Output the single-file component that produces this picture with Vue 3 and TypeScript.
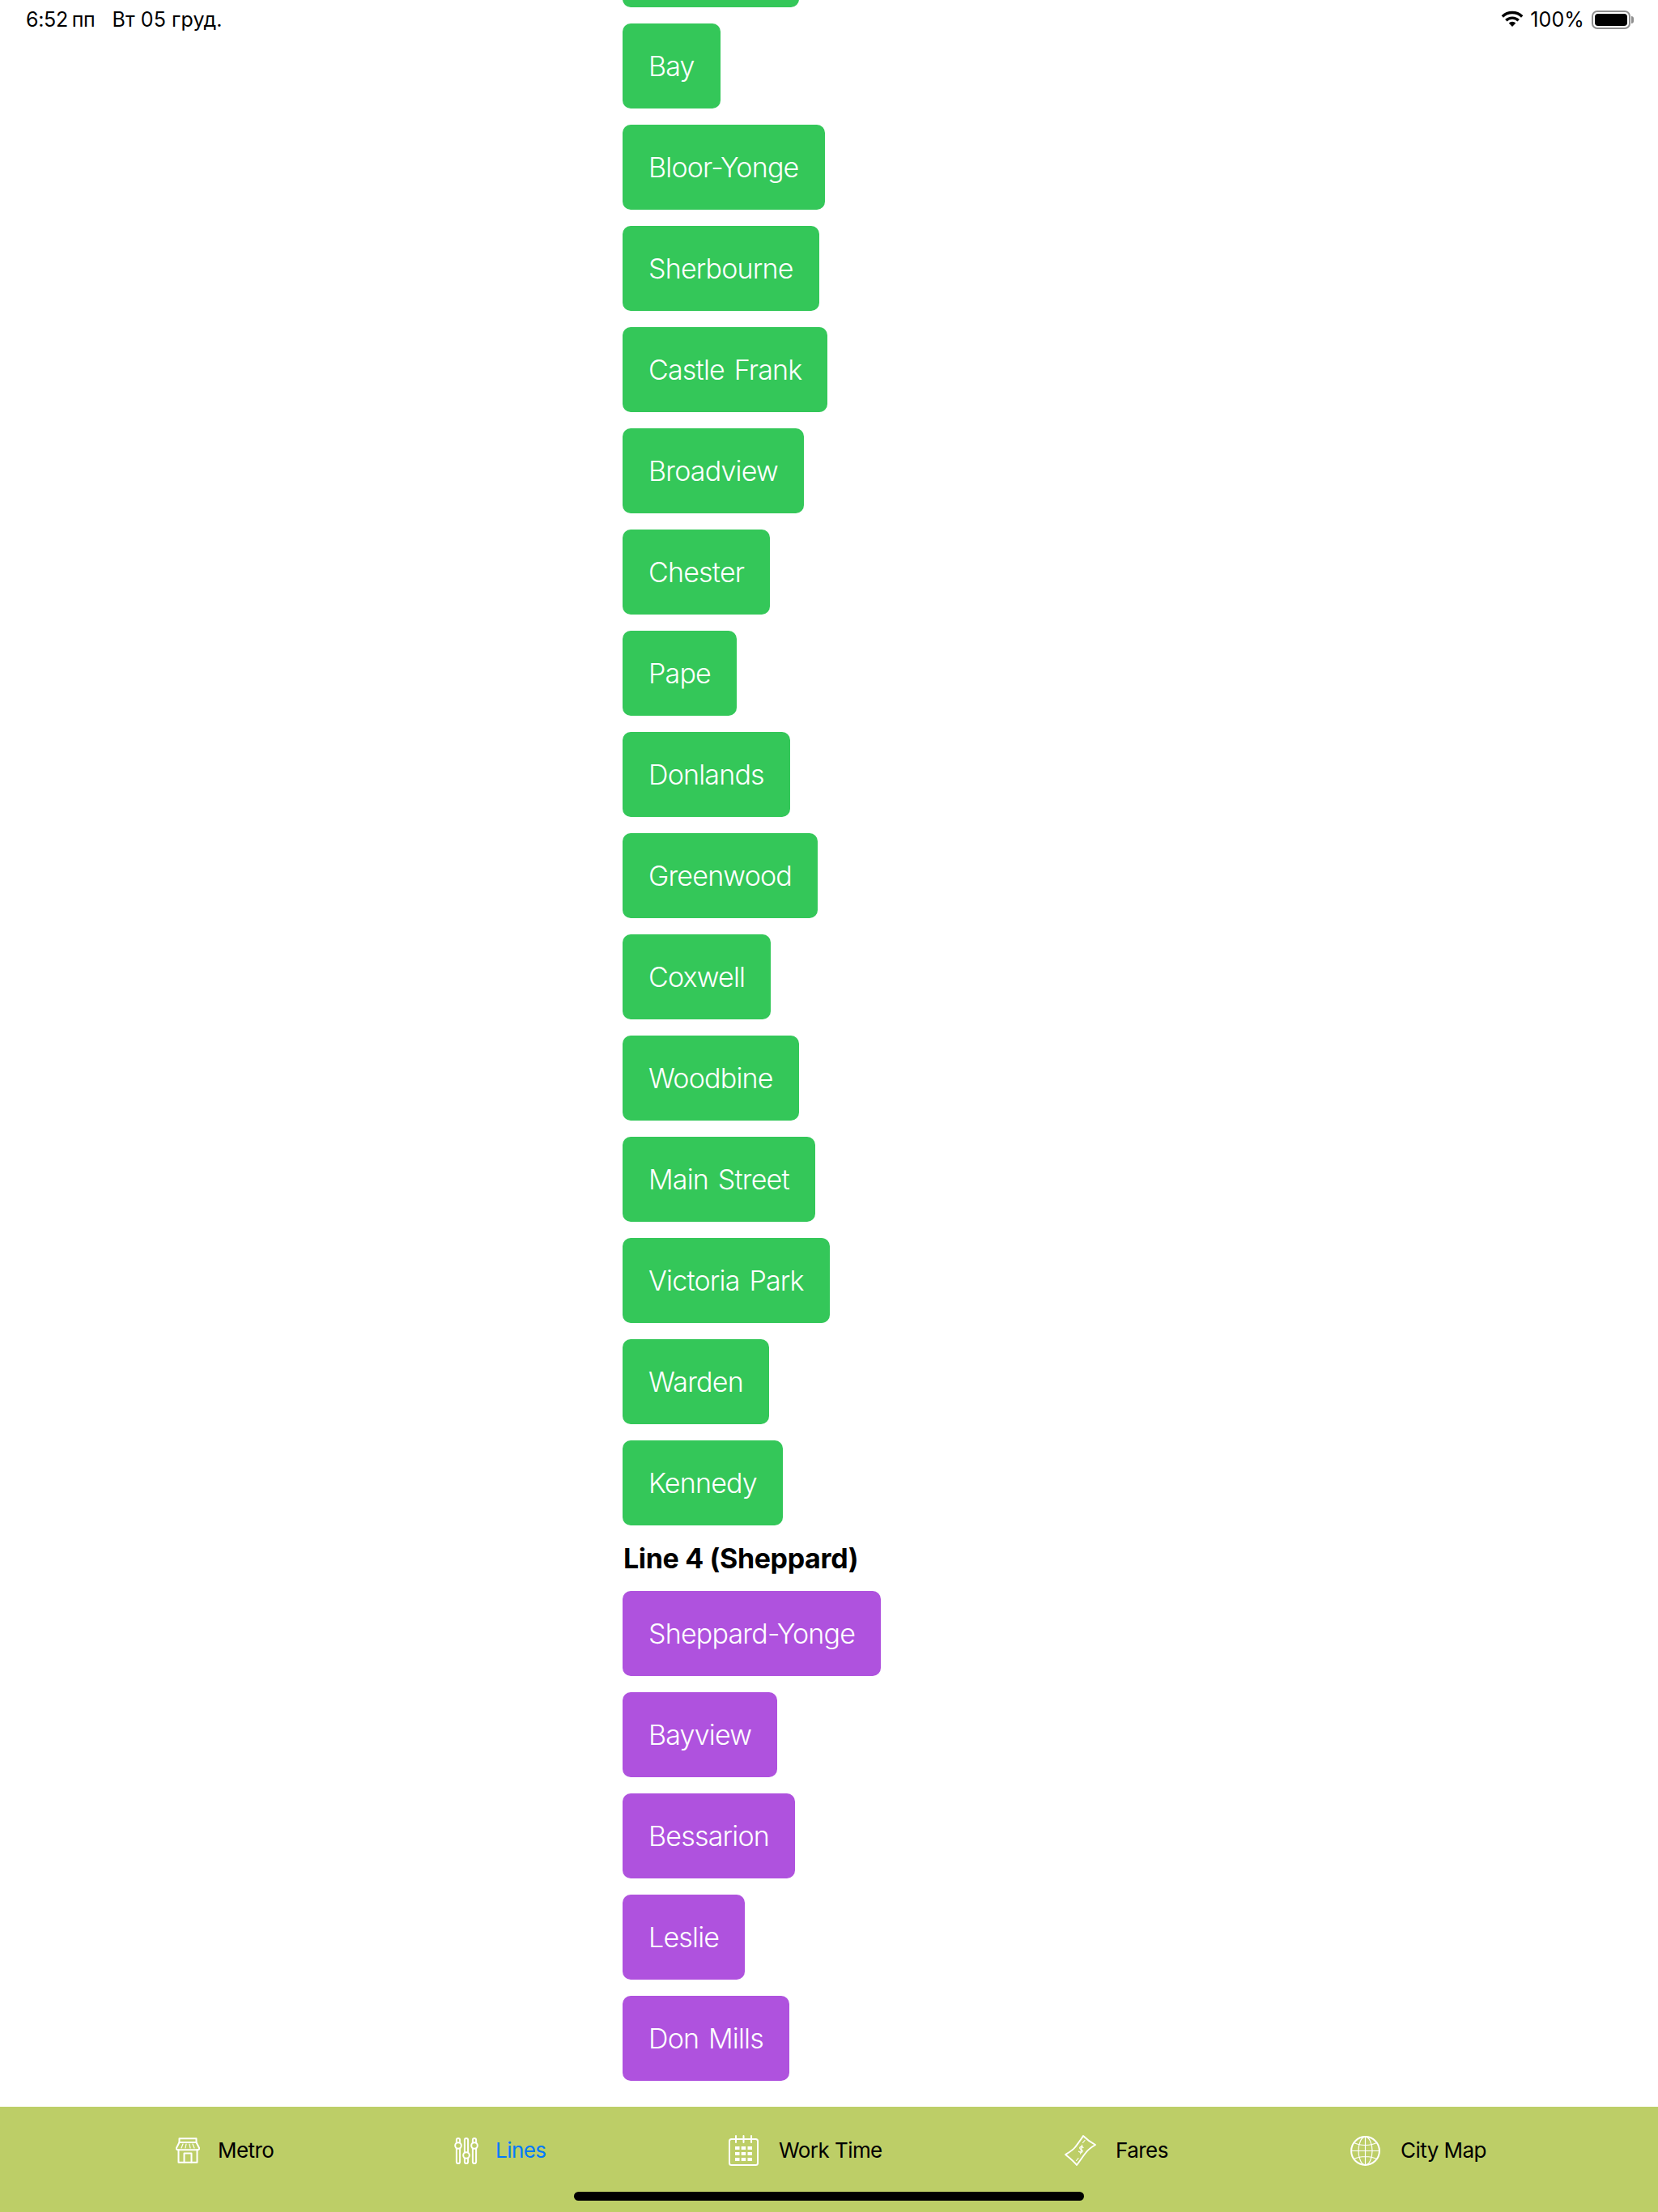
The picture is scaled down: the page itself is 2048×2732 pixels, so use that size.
<script setup lang="ts">
interface Line { title?: string; color: string; stations: string[] }
const lines: Line[] = [
  {
    color: 'green',
    stations: ['St George', 'Bay', 'Bloor-Yonge', 'Sherbourne', 'Castle Frank', 'Broadview', 'Chester', 'Pape', 'Donlands', 'Greenwood', 'Coxwell', 'Woodbine', 'Main Street', 'Victoria Park', 'Warden', 'Kennedy'],
  },
  {
    title: 'Line 4 (Sheppard)',
    color: 'purple',
    stations: ['Sheppard-Yonge', 'Bayview', 'Bessarion', 'Leslie', 'Don Mills'],
  },
]
const tabs = [
  { label: 'Metro', icon: 'store' },
  { label: 'Lines', icon: 'sliders', active: true },
  { label: 'Work Time', icon: 'calendar' },
  { label: 'Fares', icon: 'bill' },
  { label: 'City Map', icon: 'globe' },
]
</script>

<template>
  <div class="screen">
    <div class="status">
      <div class="status-left">
        <span class="time">6:52 пп</span>
        <span>Вт 05 груд.</span>
      </div>
      <div class="status-right">
        <svg class="wifi" viewBox="0 0 28 20" width="28" height="20">
          <path d="M14 20 l-4.300 -4.400 a6.200 6.200 0 0 1 8.600 0 Z" fill="#000" />
          <path d="M6.300 12.300 a11 11 0 0 1 15.400 0" fill="none" stroke="#000" stroke-width="3.400" />
          <path d="M1.800 7.500 a17.500 17.500 0 0 1 24.400 0" fill="none" stroke="#000" stroke-width="3.400" />
        </svg>
        <span class="percent">100%</span>
        <div class="battery"><div class="battery-fill"></div></div>
      </div>
    </div>

    <main class="content">
      <template v-for="line in lines" :key="line.color">
        <h2 v-if="line.title" class="line-title">{{ line.title }}</h2>
        <button v-for="s in line.stations" :key="s" class="station" :class="line.color">{{ s }}</button>
      </template>
    </main>

    <nav class="tabbar">
      <div v-for="t in tabs" :key="t.label" class="tab" :class="[{ active: t.active }, t.icon]">
        <svg v-if="t.icon === 'store'" class="icon" width="30" height="32" viewBox="0 0 30 32" fill="none" stroke="#fff" stroke-width="2" stroke-linejoin="round" stroke-linecap="round">
          <path d="M4.500 6V1.200h21V6" />
          <path d="M4.500 6h21l3.700 7.200a2 2 0 0 1-2 2H2.800a2 2 0 0 1-2-2z" />
          <path d="M9 8 7 13M13 8l-1 5M17 8l1 5M21 8l2 5" stroke-width="1.200" />
          <path d="M3.500 15.200v15.600h23V15.200" />
          <path d="M10.500 30.800V19.500h9v11.300" />
        </svg>
        <svg v-else-if="t.icon === 'sliders'" class="icon" width="30" height="33" viewBox="0 0 30 33" fill="none" stroke="#fff" stroke-width="2">
          <rect x="2.900" y="1" width="4.200" height="31" rx="2.100" />
          <rect x="12.900" y="1" width="4.200" height="31" rx="2.100" />
          <rect x="22.900" y="1" width="4.200" height="31" rx="2.100" />
          <circle cx="5" cy="10" r="3.800" fill="#BDCE67" />
          <circle cx="15" cy="22" r="3.800" fill="#BDCE67" />
          <circle cx="25" cy="10" r="3.800" fill="#BDCE67" />
        </svg>
        <svg v-else-if="t.icon === 'calendar'" class="icon" width="37" height="38" viewBox="0 0 37 38" fill="none" stroke="#fff" stroke-width="2" stroke-linecap="round">
          <rect x="1" y="5" width="35" height="32" rx="2.500" />
          <path d="M9 1v8M18.500 1v8M28 1v8" />
          <g fill="#fff" stroke="none">
            <rect x="8" y="14" width="5.500" height="4" /><rect x="15.700" y="14" width="5.500" height="4" /><rect x="23.500" y="14" width="5.500" height="4" />
            <rect x="8" y="21" width="5.500" height="4" /><rect x="15.700" y="21" width="5.500" height="4" /><rect x="23.500" y="21" width="5.500" height="4" />
            <rect x="8" y="28" width="5.500" height="4" /><rect x="15.700" y="28" width="5.500" height="4" /><rect x="23.500" y="28" width="5.500" height="4" />
          </g>
        </svg>
        <svg v-else-if="t.icon === 'bill'" class="icon" width="39" height="38" viewBox="0 0 39 38" fill="none" stroke="#fff" stroke-width="1.900" stroke-linejoin="round" stroke-linecap="round">
          <path d="M1 24 C6 21 10 19 13 15 C16 11 20 6 23 1 C27 5 32 9 38 12 C33 15 29 18 26 22 C22 27 19 32 15 37 C11 32 6 28 1 24 Z" />
          <path d="M23 15.500c-1-1.500-4-1.500-4.300.4-.3 2 3.800 1.900 3.500 4.100-.3 1.900-3.500 1.800-4.700.2M21.500 12.500l-1.800 10.500" stroke-width="1.300" />
          <path d="M25 6.500l-2.500 3M17 28.500l-2.500 3" stroke-width="1.100" />
        </svg>
        <svg v-else class="icon" width="37" height="37" viewBox="0 0 37 37" fill="none" stroke="#fff" stroke-width="1.200">
          <circle cx="18.500" cy="18.500" r="17.400" stroke-width="2" />
          <ellipse cx="18.500" cy="18.500" rx="8.500" ry="17.400" />
          <path d="M18.500 1v35M1 18.500h35M4.500 8.500c8 4 20 4 28 0M4.500 28.500c8-4 20-4 28 0" />
        </svg>
        <span class="tab-label">{{ t.label }}</span>
      </div>
    </nav>
    <div class="home-indicator"></div>
  </div>
</template>

<style scoped>
.screen {
  position: relative;
  width: 2048px;
  height: 2732px;
  overflow: hidden;
  display: flex;
  flex-direction: column;
  background: #fff;
  font-family: Inter, "Noto Sans", sans-serif;
  color: #000;
}
.status {
  position: absolute;
  top: 0;
  left: 0;
  right: 0;
  height: 48px;
  display: flex;
  justify-content: space-between;
  align-items: center;
  padding: 0 30px 0 32px;
  font-size: 25px;
  letter-spacing: 0.1px;
}
.status-left { display: flex; gap: 21px; }
.time { word-spacing: -2px; letter-spacing: -0.3px; }
.status-right { display: flex; align-items: center; gap: 9px; }
.wifi { margin-top: -2px; margin-right: -1px; }
.battery {
  position: relative;
  width: 48px;
  height: 23px;
  border: 2px solid #8e8e8e;
  border-radius: 7px;
  padding: 2px;
  box-sizing: border-box;
  margin-right: 4px;
}
.battery::after {
  content: "";
  position: absolute;
  right: -6px;
  top: 5px;
  width: 3px;
  height: 9px;
  background: #8e8e8e;
  border-radius: 0 3px 3px 0;
}
.battery-fill { width: 100%; height: 100%; background: #000; border-radius: 4px; }
.content {
  flex: 1;
  min-height: 0;
  display: flex;
  flex-direction: column;
  align-items: flex-start;
  gap: 20px;
  padding-left: 769px;
  margin-top: -96px;
}
.station {
  flex: none;
  height: 105px;
  padding: 0 32px;
  border: 0;
  border-radius: 10px;
  color: #fff;
  font-family: inherit;
  font-size: 34px;
  font-weight: 300;
  letter-spacing: -0.8px;
  word-spacing: 3px;
  white-space: nowrap;
}
.green { background: #34c759; }
.purple { background: #af52de; }
.line-title {
  margin: 0;
  height: 41px;
  font-size: 34px;
  line-height: 41px;
  font-weight: 700;
  letter-spacing: -0.35px;
  padding-left: 1px;
}
.tabbar {
  flex: none;
  height: 130px;
  background: #bdce67;
  display: grid;
  grid-template-columns: 344px 339px 415px 353px 1fr;
  align-items: center;
  padding: 0 0 22px 217px;
  box-sizing: border-box;
}
.tab { display: flex; align-items: center; gap: 22px; font-size: 26px; letter-spacing: -0.55px; }
.tab.sliders { gap: 21px; }
.tab.calendar, .tab.globe { gap: 25px; }
.tab.bill { gap: 24px; }
.tab-label { line-height: 32px; }
.tab.active .tab-label { color: #007aff; }
.icon { flex: none; }
.home-indicator {
  position: absolute;
  left: 709px;
  bottom: 14px;
  width: 630px;
  height: 11px;
  border-radius: 6px;
  background: #000;
}
</style>
